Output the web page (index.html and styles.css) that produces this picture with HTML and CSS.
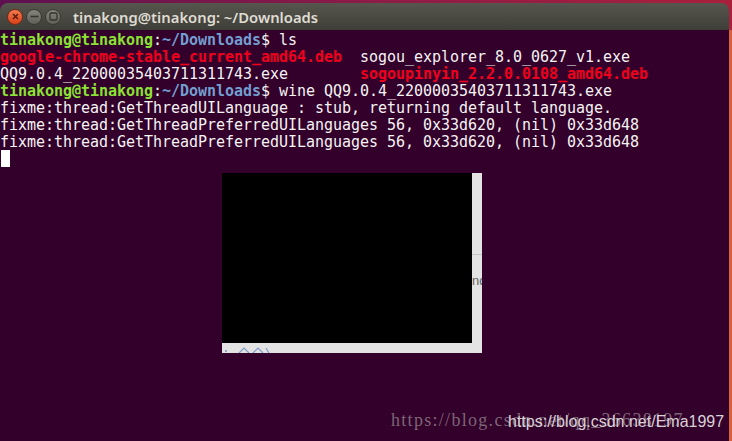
FILE: index.html
```html
<!DOCTYPE html>
<html lang="en">
<head>
<meta charset="utf-8">
<title>tinakong@tinakong: ~/Downloads</title>
<link rel="stylesheet" href="styles.css">
</head>
<body>
<div class="desktop">
  <div class="window">
    <header class="titlebar">
      <div class="controls">
        <span class="btn close"><svg width="9" height="9" viewBox="0 0 9 9"><path d="M2 2l5 5M7 2l-5 5" stroke="#5a1a08" stroke-width="1.5" fill="none"/></svg></span>
        <span class="btn"><svg width="9" height="9" viewBox="0 0 9 9"><path d="M0.5 4.5h8" stroke="#35352f" stroke-width="1.6" fill="none"/></svg></span>
        <span class="btn"><svg width="9" height="9" viewBox="0 0 9 9"><rect x="1" y="1" width="7" height="7" rx="1" stroke="#35352f" stroke-width="1.3" fill="none"/></svg></span>
      </div>
      <div class="title">tinakong@tinakong: ~/Downloads</div>
    </header>
    <main class="terminal">
<pre class="output"><span class="g">tinakong@tinakong</span>:<span class="b">~/Downloads</span>$ ls
<span class="r">google-chrome-stable_current_amd64.deb</span>  sogou_explorer_8.0_0627_v1.exe
QQ9.0.4_22000035403711311743.exe        <span class="r">sogoupinyin_2.2.0.0108_amd64.deb</span>
<span class="g">tinakong@tinakong</span>:<span class="b">~/Downloads</span>$ wine QQ9.0.4_22000035403711311743.exe
fixme:thread:GetThreadUILanguage : stub, returning default language.
fixme:thread:GetThreadPreferredUILanguages 56, 0x33d620, (nil) 0x33d648
fixme:thread:GetThreadPreferredUILanguages 56, 0x33d620, (nil) 0x33d648
<span class="cursor"> </span></pre>
      <div class="popup">
        <div class="black"></div>
        <div class="side"><span class="rule"></span><span class="clip">nd</span></div>
        <div class="bottom"><svg width="50" height="7" viewBox="0 0 50 7"><circle cx="4" cy="5" r="1" fill="#7f93b5"/><path d="M17 7l5-5 5 5M31 7l5-5 5 5M44 2l3 5" stroke="#7f9cc8" stroke-width="1.2" fill="none"/></svg></div>
      </div>
      <div class="wm wm1">https://blog.csdn.net/qq_36638197</div>
      <div class="wm wm2">https://blog.csdn.net/Ema1997</div>
    </main>
  </div>
  <div class="edge"></div>
</div>
</body>
</html>
```
FILE: styles.css
```css
* { box-sizing: border-box; }
html, body { margin: 0; padding: 0; }
body { width: 732px; height: 441px; overflow: hidden; background: #33002b; }
.desktop { display: flex; width: 732px; height: 441px; background: linear-gradient(90deg, #5e1050, #8c1c48 50%, #a8203c); }
.window { flex: 1; display: flex; flex-direction: column; padding-top: 3px; }
.titlebar {
  height: 27px; display: flex; align-items: center; padding-left: 7px; gap: 12px; flex: none;
  background: linear-gradient(#56564e, #3e3e38);
  border-radius: 8px 8px 0 0;
}
.controls { display: flex; gap: 3px; }
.btn {
  width: 16px; height: 16px; border-radius: 50%; display: flex; align-items: center; justify-content: center;
  background: linear-gradient(#85857b, #5f5f57); border: 1px solid #3a3a34;
}
.btn.close { background: linear-gradient(#f47a4e, #d8411a); border-color: #7a2a12; }
.title { font: 600 14.8px "Noto Sans", "Liberation Sans", sans-serif; color: #dfdbd2; white-space: nowrap; }
.terminal { flex: 1; position: relative; background: #33002b; overflow: hidden; }
.output {
  margin: 0; padding: 2px 0 0 0; font: 15px/17px "DejaVu Sans Mono", monospace; letter-spacing: -0.03px; color: #f4f4f2;
}
.g { color: #8ae234; font-weight: bold; }
.b { color: #729fcf; font-weight: bold; }
.r { color: #f0001c; font-weight: bold; }
.cursor { display: inline-block; width: 9px; height: 17px; margin: -1px 0 0 1px; background: #fff; vertical-align: top; }
.popup {
  position: absolute; left: 222px; top: 143px; width: 260px; height: 180px;
  display: grid; grid-template-columns: 250px 10px; grid-template-rows: 170px 10px; background: #e3e3e3;
}
.black { background: #000; }
.side { position: relative; overflow: hidden; }
.rule { position: absolute; left: 0; right: 0; top: 81px; height: 1px; background: #c4c4c4; }
.clip { position: absolute; left: 0; top: 100px; font: 13px "Liberation Sans", sans-serif; color: #666; }
.bottom { grid-column: 1 / 3; overflow: hidden; display: flex; align-items: flex-end; }
.wm { position: absolute; white-space: nowrap; }
.wm1 { left: 391px; top: 380px; font: 18px "Liberation Serif", serif; letter-spacing: 1.3px; color: #7c6676; }
.wm2 { left: 508px; top: 383px; font: 16px "Liberation Sans", sans-serif; color: #d8d2d6; }
.edge { width: 3px; margin-top: 30px; background: #d9603c; }
```
